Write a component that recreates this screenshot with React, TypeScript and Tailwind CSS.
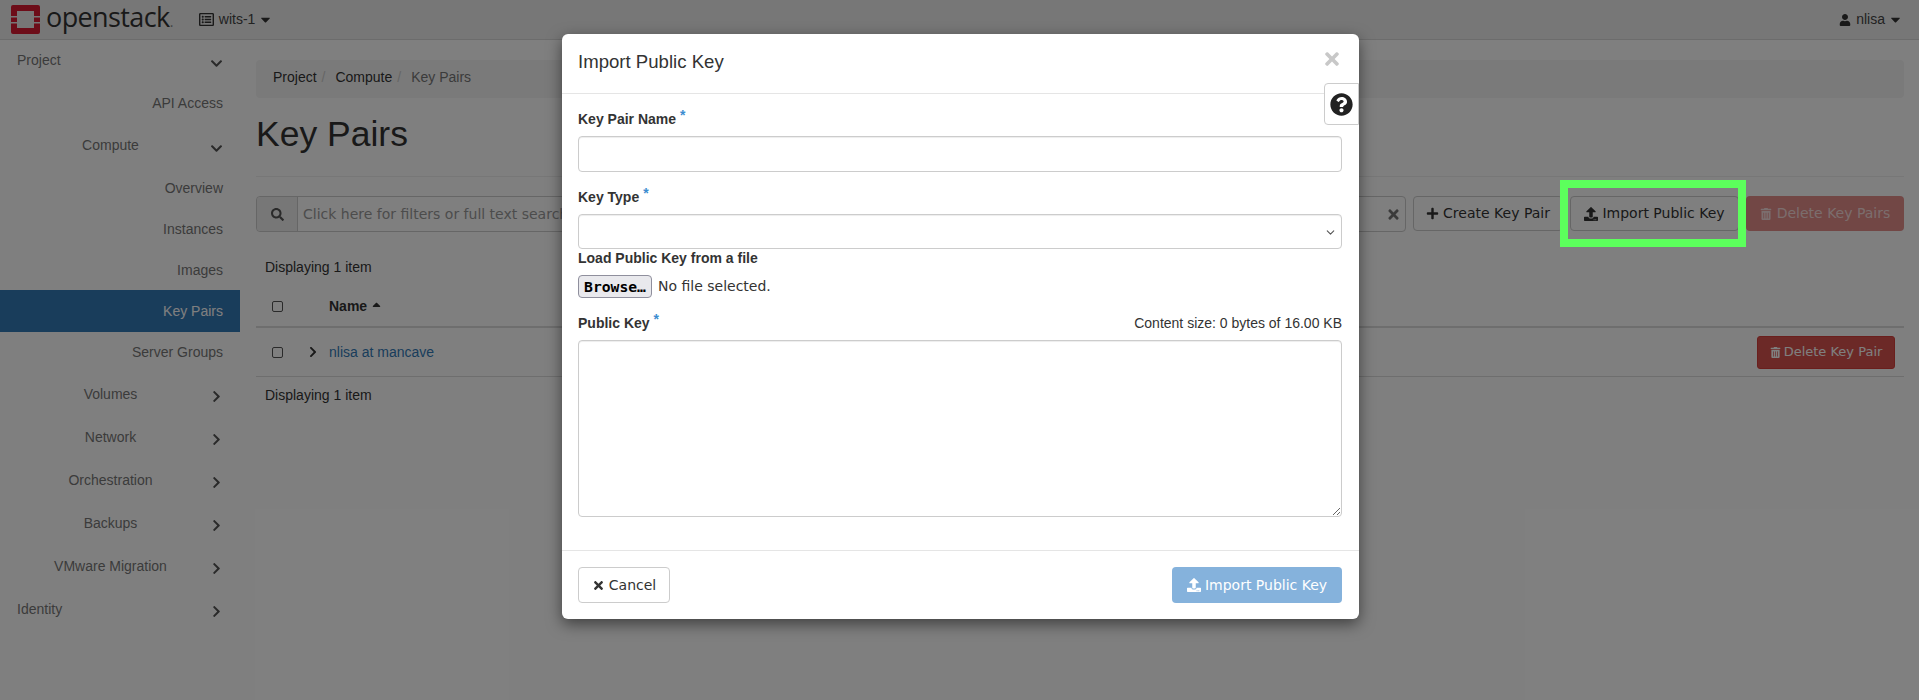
import { ChevronDown } from "lucide-react";
import {
  FaCaretDown,
  FaCaretUp,
  FaChevronDown,
  FaChevronRight,
  FaPlus,
  FaQuestionCircle,
  FaRegListAlt,
  FaSearch,
  FaTimes,
  FaTrashAlt,
  FaUpload,
  FaUser,
} from "react-icons/fa";

function Logo() {
  return (
    <svg width="29" height="29" viewBox="0 0 29 29" className="shrink-0">
      <path
        fill="#da1a32"
        d="M2 0h25a2 2 0 0 1 2 2v9h-6V6H6v5H0V2a2 2 0 0 1 2-2zM0 12.5h6V17H0zM23 12.5h6V17h-6zM0 18.5h6V23h17v-4.5h6V27a2 2 0 0 1-2 2H2a2 2 0 0 1-2-2z"
      />
    </svg>
  );
}

function NavHeader({ label, open, center }: { label: string; open?: boolean; center?: boolean }) {
  return (
    <div className={`h-[43px] flex items-center pl-[17px] pr-[17px] text-[#777] ${center ? "text-center" : ""}`}>
      <span className={`flex-1 ${center ? "pr-[6px]" : ""} ${open ? "" : "pt-[2px]"}`}>{label}</span>
      <span className="mt-[6px] text-[#555] text-[13px]">{open ? <FaChevronDown /> : <FaChevronRight />}</span>
    </div>
  );
}

function NavItem({ label, active, height = "h-[41px]" }: { label: string; active?: boolean; height?: string }) {
  return (
    <div
      className={`flex items-center justify-end pr-[17px] ${height} ${active ? "bg-[#337ab7] text-white" : "text-[#777]"}`}
    >
      {label}
    </div>
  );
}

function Sidebar() {
  return (
    <aside className="w-[240px] shrink-0 -mt-[1px]">
      <NavHeader label="Project" open />
      <NavItem label="API Access" height="h-[42px]" />
      <NavHeader label="Compute" open center />
      <NavItem label="Overview" height="h-[41px] pt-[2px]" />
      <NavItem label="Instances" height="h-[41px] pt-[2px]" />
      <NavItem label="Images" height="h-[41px] pt-[2px]" />
      <NavItem label="Key Pairs" active height="h-[42px]" />
      <NavItem label="Server Groups" height="h-[40px]" />
      <NavHeader label="Volumes" center />
      <NavHeader label="Network" center />
      <NavHeader label="Orchestration" center />
      <NavHeader label="Backups" center />
      <NavHeader label="VMware Migration" center />
      <NavHeader label="Identity" />
    </aside>
  );
}

function Toolbar() {
  return (
    <div className="mt-[19px] flex gap-[7px] font-['DejaVu_Sans',sans-serif] text-[14px]">
      <div className="flex-1 h-[36px] flex border border-[#ccc] rounded-[4px] bg-white">
        <div className="w-[41px] bg-[#eee] border-r border-[#ccc] rounded-l-[4px] flex items-center justify-center text-[#555] text-[13px]">
          <FaSearch />
        </div>
        <div className="flex-1 px-[5px] flex items-center text-[#999]">Click here for filters or full text search</div>
        <div className="w-[24px] flex items-center justify-center text-[#777] text-[15px]">
          <FaTimes />
        </div>
      </div>
      <button className="w-[150px] h-[35px] border border-[#ccc] rounded-[4px] bg-white text-[#333] flex items-center justify-center gap-[4px]">
        <FaPlus className="text-[13px]" />
        Create Key Pair
      </button>
      <button className="w-[169px] h-[35px] border border-[#ccc] rounded-[4px] bg-white text-[#333] flex items-center justify-center gap-[4px]">
        <FaUpload className="text-[14px]" />
        Import Public Key
      </button>
      <button className="w-[158px] h-[35px] rounded-[4px] bg-[#e58e8b] text-white/70 flex items-center justify-center gap-[5px]">
        <FaTrashAlt className="text-[12px]" />
        Delete Key Pairs
      </button>
    </div>
  );
}

function KeyTable() {
  return (
    <div className="mt-[25px]">
      <div className="leading-5 pl-[9px]">Displaying 1 item</div>
      <div className="h-[41px] mt-[10px] border-b-2 border-[#ddd] flex items-center">
        <span className="w-[11px] h-[11px] ml-[16px] border border-[#555] rounded-[2px]" />
        <span className="ml-[46px] font-bold text-[#333] flex items-center gap-[3px]">
          Name <FaCaretUp className="text-[13px] -mt-[4px]" />
        </span>
      </div>
      <div className="h-[49px] border-b border-[#ddd] flex items-center">
        <span className="w-[11px] h-[11px] ml-[16px] border border-[#555] rounded-[2px]" />
        <FaChevronRight className="ml-[24px] text-[12px] text-[#333]" />
        <a className="ml-[10px] text-[#337ab7]">nlisa at mancave</a>
        <button className="ml-auto mr-[9px] w-[138px] h-[33px] rounded-[3px] bg-[#d9534f] border border-[#d43f3a] text-white font-['DejaVu_Sans',sans-serif] text-[13px] flex items-center justify-center gap-[3px]">
          <FaTrashAlt className="text-[11px]" />
          Delete Key Pair
        </button>
      </div>
      <div className="leading-5 pl-[9px] mt-[8px]">Displaying 1 item</div>
    </div>
  );
}

function Page() {
  return (
    <div className="h-[700px] bg-white text-[14px] text-[#333] font-['Liberation_Sans',Arial,sans-serif]">
      <header className="h-[40px] bg-[#efefef] border-b border-[#d8d8d8] flex items-center pl-[11px] pr-[16px]">
        <Logo />
        <span className="ml-[6px] text-[#333] text-[27px] leading-[36px] font-['Open_Sans',sans-serif] tracking-[-0.6px]">
          openstack<span className="text-[#888] text-[14px]">.</span>
        </span>
        <FaRegListAlt className="ml-[26px] text-[15px] text-[#333]" />
        <span className="ml-[5px] text-[#444]">wits-1</span>
        <FaCaretDown className="ml-[3px] text-[15px] text-[#333]" />
        <FaUser className="ml-auto text-[12px] text-[#333]" />
        <span className="ml-[5px] text-[#444]">nlisa</span>
        <FaCaretDown className="ml-[3px] text-[15px] text-[#333]" />
      </header>
      <div className="flex">
        <Sidebar />
        <main className="flex-1 min-w-0 pl-[16px] pr-[15px]">
          <nav className="mt-[20px] h-[38px] bg-[#f5f5f5] rounded-[4px] flex items-center pl-[17px] pb-[4px] text-[14px]">
            <span>Project</span>
            <span className="text-[#ccc] pl-[5px] pr-[10px]">/</span>
            <span>Compute</span>
            <span className="text-[#ccc] pl-[5px] pr-[10px]">/</span>
            <span className="text-[#777]">Key Pairs</span>
          </nav>
          <h1 className="mt-[16px] text-[35.5px] leading-[40px] font-normal">Key Pairs</h1>
          <div className="mt-[22px] border-t border-[#eee]" />
          <Toolbar />
          <KeyTable />
        </main>
      </div>
    </div>
  );
}

function Label({ text, required }: { text: string; required?: boolean }) {
  return (
    <label className="block leading-5 font-bold text-[#333]">
      {text}
      {required && <span className="relative -top-[4px] ml-[4px] text-[#3c8dd0] text-[14px] font-bold">*</span>}
    </label>
  );
}

function ImportModal() {
  return (
    <div className="absolute left-[562px] top-[34px] w-[797px] bg-white rounded-[6px] shadow-[0_5px_15px_rgba(0,0,0,0.5)] text-[14px] text-[#333] font-['Liberation_Sans',Arial,sans-serif]">
      <div className="relative h-[60px] border-b border-[#e5e5e5] flex items-center pl-[16px]">
        <h4 className="text-[18.6px] font-normal -mt-[4px]">Import Public Key</h4>
        <FaTimes className="absolute right-[17px] top-[15px] text-[#c8c8c8] text-[20px]" />
        <div className="absolute right-0 top-[49px] w-[35px] h-[42px] bg-white border border-[#ccc] rounded-l-[4px] flex items-center justify-center text-[#222] text-[23px]">
          <FaQuestionCircle />
        </div>
      </div>
      <div className="pl-[16px] pr-[17px] pt-[15px] pb-[33px]">
        <Label text="Key Pair Name" required />
        <input className="block w-full h-[36px] mt-[7px] border border-[#ccc] rounded-[4px] shadow-[inset_0_1px_1px_rgba(0,0,0,0.075)]" />
        <div className="mt-[15px]">
          <Label text="Key Type" required />
        </div>
        <div className="relative mt-[7px]">
          <select className="block w-full h-[35px] border border-[#ccc] rounded-[4px] appearance-none bg-white shadow-[inset_0_1px_1px_rgba(0,0,0,0.075)]" />
          <ChevronDown size={13} className="absolute right-[5px] top-[12px] text-[#555]" />
        </div>
        <div className="-mt-[1px]">
          <Label text="Load Public Key from a file" />
        </div>
        <div className="mt-[7px] flex items-center font-['DejaVu_Sans',sans-serif] text-[14px]">
          <button className="w-[74px] h-[23px] bg-[#e9e9ed] border border-[#8f8f9d] rounded-[4px] font-['DejaVu_Sans_Mono',monospace] font-bold text-[#000] text-[14.7px]">
            Browse…
          </button>
          <span className="ml-[6px]">No file selected.</span>
        </div>
        <div className="mt-[15px] flex justify-between leading-5">
          <Label text="Public Key" required />
          <span>Content size: 0 bytes of 16.00 KB</span>
        </div>
        <textarea className="block w-full h-[177px] mt-[7px] border border-[#ccc] rounded-[4px] shadow-[inset_0_1px_1px_rgba(0,0,0,0.075)]" />
      </div>
      <div className="border-t border-[#e5e5e5] pl-[16px] pr-[17px] py-[16px] flex justify-between font-['DejaVu_Sans',sans-serif] text-[14px]">
        <button className="w-[92px] h-[36px] border border-[#ccc] rounded-[4px] bg-white flex items-center justify-center gap-[4px]">
          <FaTimes className="text-[13px]" />
          Cancel
        </button>
        <button className="w-[170px] h-[36px] rounded-[4px] bg-[#85b2dc] text-white flex items-center justify-center gap-[4px]">
          <FaUpload className="text-[14px]" />
          Import Public Key
        </button>
      </div>
    </div>
  );
}

export default function App() {
  return (
    <div className="relative h-[700px] overflow-hidden">
      <Page />
      <div className="absolute inset-0 bg-black/50" />
      <ImportModal />
      <div className="absolute left-[1560px] top-[180px] w-[186px] h-[67px] border-[8px] border-[#5cff5c]" />
    </div>
  );
}
